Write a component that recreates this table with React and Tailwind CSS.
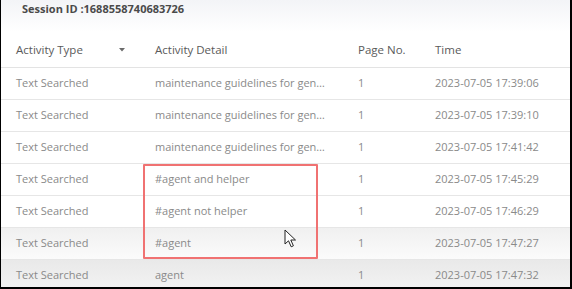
import React from "react";

const rows = [
  ["Text Searched", "maintenance guidelines for gen…", "1", "2023-07-05 17:39:06", ""],
  ["Text Searched", "maintenance guidelines for gen…", "1", "2023-07-05 17:39:10", ""],
  ["Text Searched", "maintenance guidelines for gen…", "1", "2023-07-05 17:41:42", ""],
  ["Text Searched", "#agent and helper", "1", "2023-07-05 17:45:29", ""],
  ["Text Searched", "#agent not helper", "1", "2023-07-05 17:46:29", ""],
  ["Text Searched", "#agent", "1", "2023-07-05 17:47:27", "g1"],
  ["Text Searched", "agent", "1", "2023-07-05 17:47:32", "g2"],
];

export default function App() {
  return (
    <div
      className="relative w-[572px] h-[289px] overflow-hidden bg-white border-l border-r-2 border-b-2 border-black"
      style={{ fontFamily: '"Open Sans", "Liberation Sans", sans-serif' }}
    >
      <div className="h-[32px] pl-[21px] bg-gradient-to-b from-[#f3f4f7] to-white">
        <div className="text-[11px] font-bold text-[#4a4a4a] leading-[18px]">
          Session ID :1688558740683726
        </div>
      </div>
      <div className="grid grid-cols-[139px_203px_77px_1fr] h-[36px] items-center pl-[15px] border-b border-[#e3e3e3] text-[11.5px] font-medium text-[#5a5a5a]">
        <div className="flex items-center">
          <span>Activity Type</span>
          <svg width="6" height="4" viewBox="0 0 6 4" className="ml-[36px] mt-[1px]">
            <path d="M0 0 L6 0 L3 3.5 Z" fill="#6a6a6a" />
          </svg>
        </div>
        <div>Activity Detail</div>
        <div>Page No.</div>
        <div>Time</div>
      </div>
      {rows.map((r, i) => (
        <div
          key={i}
          className={
            "grid grid-cols-[139px_203px_77px_1fr] h-[32px] items-center pl-[15px] border-b border-[#e6e6e6] text-[11px] text-[#8a8a8a] " +
            (r[4] === "g1"
              ? "bg-gradient-to-b from-[#f0f0f0] to-[#fbfbfb]"
              : r[4] === "g2"
              ? "bg-gradient-to-b from-[#e9e9e9] to-[#f3f3f3]"
              : "bg-white")
          }
        >
          <div>{r[0]}</div>
          <div className="whitespace-nowrap">{r[1]}</div>
          <div>{r[2]}</div>
          <div>{r[3]}</div>
        </div>
      ))}
      <div className="absolute left-[142px] top-[164px] w-[175px] h-[95px] border-2 border-[#f07272] rounded-[1px] pointer-events-none" />
      <svg
        className="absolute left-[283px] top-[229px]"
        width="14"
        height="20"
        viewBox="0 0 14 20"
      >
        <path
          d="M1 1 L1 15 L4.5 11.8 L7.2 17.8 L9.4 16.8 L6.8 11 L11.5 11 Z"
          fill="white"
          stroke="#222"
          strokeWidth="1"
          strokeLinejoin="round"
        />
      </svg>
    </div>
  );
}
